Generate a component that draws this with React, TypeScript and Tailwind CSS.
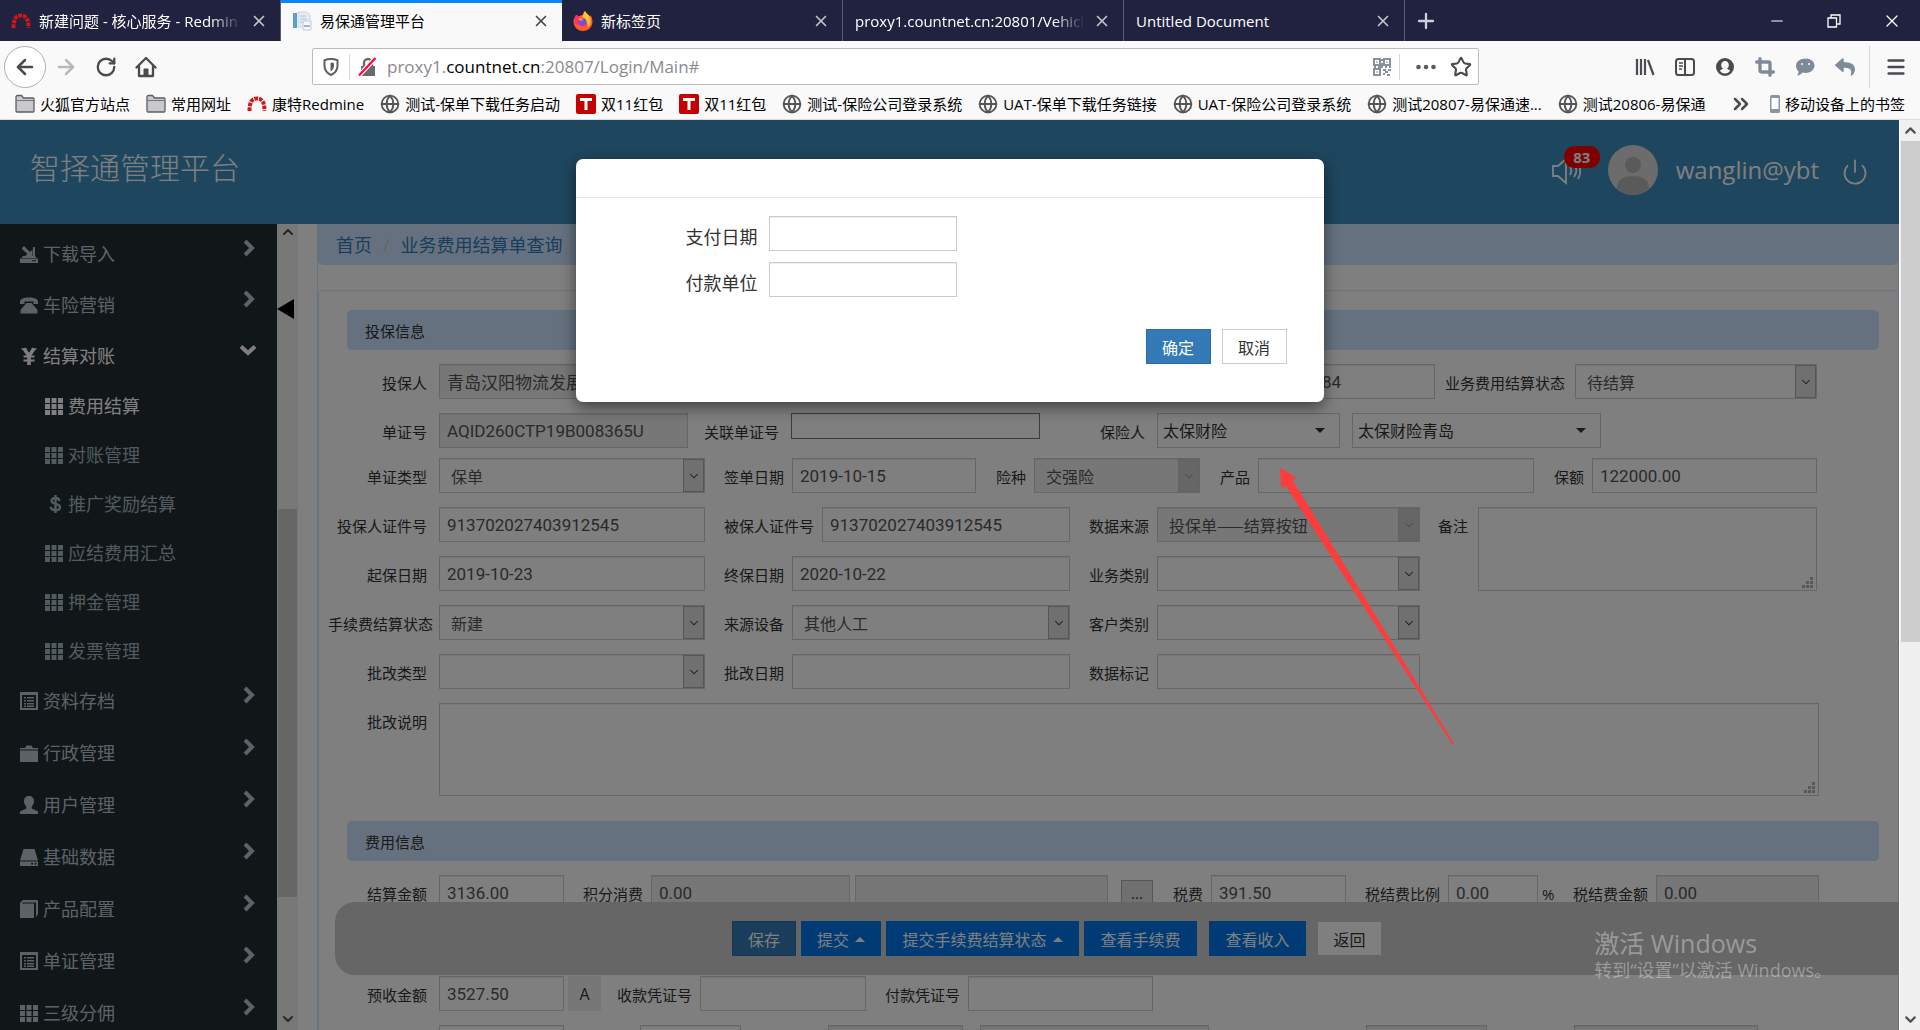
import type { ReactNode } from "react";
import clsx from "clsx";
import {
  ArrowLeft,
  ArrowRight,
  ChevronDown,
  ChevronUp,
  ChevronsRight,
  Crop,
  Globe,
  Menu,
  Minus,
  Plus,
  Power,
  RotateCw,
  Star,
  X,
} from "lucide-react";
import { FaReply } from "react-icons/fa";

const tabs = [
  { title: "新建问题 - 核心服务 - Redmin", icon: "redmine", fade: true },
  { title: "易保通管理平台", icon: "doc", active: true },
  { title: "新标签页", icon: "firefox" },
  { title: "proxy1.countnet.cn:20801/Vehicl", icon: "", fade: true },
  { title: "Untitled Document", icon: "" },
];

const bookmarks = [
  { title: "火狐官方站点", icon: "folder" },
  { title: "常用网址", icon: "folder" },
  { title: "康特Redmine", icon: "redmine" },
  { title: "测试-保单下载任务启动", icon: "globe" },
  { title: "双11红包", icon: "tmall" },
  { title: "双11红包", icon: "tmall" },
  { title: "测试-保险公司登录系统", icon: "globe" },
  { title: "UAT-保单下载任务链接", icon: "globe" },
  { title: "UAT-保险公司登录系统", icon: "globe" },
  { title: "测试20807-易保通速...", icon: "globe" },
  { title: "测试20806-易保通", icon: "globe" },
];

const menuTop = [
  { title: "下载导入", icon: "save" },
  { title: "车险营销", icon: "phone" },
  { title: "结算对账", icon: "yen", open: true },
];

const menuSub = [
  { title: "费用结算", icon: "th", active: true },
  { title: "对账管理", icon: "th" },
  { title: "推广奖励结算", icon: "usd" },
  { title: "应结费用汇总", icon: "th" },
  { title: "押金管理", icon: "th" },
  { title: "发票管理", icon: "th" },
];

const menuBottom = [
  { title: "资料存档", icon: "list" },
  { title: "行政管理", icon: "case" },
  { title: "用户管理", icon: "user" },
  { title: "基础数据", icon: "hdd" },
  { title: "产品配置", icon: "book" },
  { title: "单证管理", icon: "list" },
  { title: "三级分佣", icon: "th" },
];

function SiteIcon({ name }: { name: string }) {
  switch (name) {
    case "redmine":
      return (
        <svg viewBox="0 0 20 20" className="size-5 shrink-0" fill="none">
          <path d="M2.5 17C2.500 8 5 4.500 10 4.500S17.500 8 17.500 17" stroke="#d01818" strokeWidth="4" strokeDasharray="3.600 1" />
        </svg>
      );
    case "doc":
      return (
        <svg viewBox="0 0 20 20" className="size-5 shrink-0">
          <path d="M1 2h4v15H1z" fill="#5a9fd0" />
          <path d="M6 1h9l3 3v12H6z" fill="#e4ecf3" stroke="#c9d5e0" />
          <path d="M8 5h6M8 8h7M8 11h4" stroke="#b4c4d3" />
          <path d="M11 10h8v9h-8z" fill="#f3f6fa" stroke="#c0ccd8" />
          <path d="M12 15h6" stroke="#a5b6c6" strokeWidth="2" />
        </svg>
      );
    case "firefox":
      return (
        <svg viewBox="0 0 20 20" className="size-5 shrink-0">
          <path d="M3 4c1 .2 2 .8 2.500 1.500C7 4.500 9 4 10 4c0-2 1-3.500 2-4 .5 2 3 3 4.500 5 1-.2 1-1 1-1C20 8 20 12 18.500 15c-2 3.500-5 5-8.500 5-6 0-9.500-5-9.500-9.500C.5 8 2 6 3 4z" fill="#ff5a2c" />
          <path d="M12 0c.5 2 3 3 4.500 5.500 2.500 4 1 9-2 11 1-3 0-6-3-7.500C9.500 8 9 5 10.500 3z" fill="#ffc72c" />
          <path d="M3 4c1 .2 2 .8 2.500 1.500L8 8l-3 6-3-1C1 9 2 6 3 4z" fill="#ff2d6f" />
          <circle cx="9.500" cy="11" r="4" fill="#7b4ad8" />
          <path d="M5 8c2-2 4-1 5.500.5L7.500 10z" fill="#ff9a2a" />
        </svg>
      );
    case "folder":
      return (
        <svg viewBox="0 0 20 20" className="size-5 shrink-0">
          <path d="M1 4.500V3a1.500 1.500 0 0 1 1.500-1.500h4L8.500 4H18a1 1 0 0 1 1 1v12a1 1 0 0 1-1 1H2a1 1 0 0 1-1-1z" fill="#c9c9cb" stroke="#5f5f61" strokeWidth="1.300" />
          <path d="M1 6.500h18" stroke="#77777a" />
        </svg>
      );
    case "tmall":
      return (
        <svg viewBox="0 0 20 20" className="size-5 shrink-0">
          <rect width="20" height="20" rx="2" fill="#c40000" />
          <path d="M4 4h12v3h-4.500v9h-3V7H4z" fill="#fff" />
        </svg>
      );
    case "globe":
      return <Globe className="size-5 shrink-0 text-[#555]" strokeWidth={2.200} />;
    default:
      return null;
  }
}

function MenuIcon({ name }: { name: string }) {
  const cls = "size-[18px] shrink-0";
  switch (name) {
    case "save":
      return (
        <svg viewBox="0 0 18 18" className={cls} fill="currentColor">
          <path d="M2 3 4 1l6 6 2.500-2.500V11H5l2.500-2L2 4zM13 2h2v9l1.500 2h-15L3 11h10z" />
          <path fillRule="evenodd" d="M0 13.500h18V18H0zm12 1.800v1h4v-1z" />
        </svg>
      );
    case "phone":
      return (
        <svg viewBox="0 0 18 18" className={cls} fill="currentColor">
          <path d="M0 6c0-3 3-4.500 9-4.500S18 3 18 6v2h-4.500V5.500h-9V8H0z" />
          <path d="M6.500 7h5l6 7v3.500H.5V14z" />
        </svg>
      );
    case "yen":
      return (
        <svg viewBox="0 0 18 18" className={cls} fill="none" stroke="currentColor" strokeWidth="2.600">
          <path d="M4 1.500 9 9l5-7.500M9 8v10" strokeWidth="3.600" />
          <path d="M3.500 9.500h11M3.500 13.500h11" strokeWidth="2" />
          <path d="M1.500 2h5M11.500 2h5" strokeWidth="1.500" />
        </svg>
      );
    case "usd":
      return (
        <svg viewBox="0 0 18 18" className={cls} fill="none" stroke="currentColor" strokeWidth="2.400">
          <path d="M14.500 6c-.3-2-2-3-4-3-2.300 0-4 1-4 2.800 0 4 8.500 2 8.500 6.400 0 2-2 3-4.300 3S6 14 5.500 11.800M10.500 0v18" />
        </svg>
      );
    case "user":
      return (
        <svg viewBox="0 0 18 18" className={cls} fill="currentColor">
          <path d="M9 0c3 0 5 2 5 5 0 2.500-1 4-2.300 5.500v2L18 15.500V18H0v-2.500l6.300-3v-2C5 9 4 7.500 4 5c0-3 2-5 5-5z" />
        </svg>
      );
    case "list":
      return (
        <svg viewBox="0 0 18 18" className={cls} fill="currentColor">
          <path fillRule="evenodd" d="M0 0h18v18H0zM2 3v13h14V3z" />
          <path d="M4 5h2v1.500H4zm3 0h7v1.500H7zM4 8h2v1.500H4zm3 0h7v1.500H7zM4 11h2v1.500H4zm3 0h7v1.500H7zM4 13.500h2V15H4zm3 0h7V15H7z" />
        </svg>
      );
    case "case":
      return (
        <svg viewBox="0 0 18 18" className={cls} fill="currentColor">
          <path d="M0 4h5l1.500-2.500h5L13 4h5v1.500H0zM0 6.500h18V18H0z" />
        </svg>
      );
    case "hdd":
      return (
        <svg viewBox="0 0 18 18" className={cls} fill="currentColor">
          <path d="M3.500 1h11L18 12.500H0z" />
          <path fillRule="evenodd" d="M0 13.500h18V18H0zm11 1.500v1.500h2V15zm3.500 0v1.500h2V15z" />
        </svg>
      );
    case "book":
      return (
        <svg viewBox="0 0 18 18" className={cls} fill="currentColor">
          <path d="M3 0h14a1 1 0 0 1 1 1v13l-2 3V2.500H3L1.500 3.500H14V18H0V3z" />
        </svg>
      );
    default:
      return (
        <svg viewBox="0 0 18 18" className={cls} fill="currentColor">
          <path d="M0 1h5v5H0zM6.500 1h5v5h-5zM13 1h5v5h-5zM0 7h5v5H0zM6.500 7h5v5h-5zM13 7h5v5h-5zM0 13h5v5H0zM6.500 13h5v5h-5zM13 13h5v5h-5z" />
        </svg>
      );
  }
}

function BrowserTabs() {
  return (
    <div className="flex h-[41px] shrink-0 items-stretch bg-[#20223f] text-white">
      {tabs.map((tab, i) => (
        <div
          key={i}
          className={clsx(
            "flex w-[281px] items-center gap-2 pr-[12px]",
            tab.icon ? "pl-[11px]" : "pl-1",
            tab.active ? "border-t-[3px] border-[#0a84ff] bg-[#f9f9fa] pb-[3px] text-black" : "border-r border-[#5b5c74]"
          )}
        >
          {tab.icon ? <SiteIcon name={tab.icon} /> : <span />}
          <span className={clsx("flex-1 whitespace-nowrap", tab.fade && "[mask-image:linear-gradient(to_left,transparent,black_32px)]")}>
            {tab.title}
          </span>
          <button aria-label="关闭标签页" className={tab.active ? "text-[#444]" : "text-[#c4c4cc]"}>
            <X className="size-[18px]" strokeWidth={2.200} />
          </button>
        </div>
      ))}
      <button aria-label="新建标签页" className="ml-[9px] text-[#d0d0d8]">
        <Plus className="size-6" strokeWidth={2.300} />
      </button>
      <div className="ml-auto flex items-center gap-[39px] pr-[18px]">
        <button aria-label="最小化">
          <Minus className="size-[18px]" strokeWidth={1.500} />
        </button>
        <button aria-label="还原">
          <svg viewBox="0 0 18 18" className="size-[18px]" fill="none" stroke="currentColor" strokeWidth="1.300">
            <path d="M3 6h8.500v9H3zM6 6V3h9v9h-3.500" />
          </svg>
        </button>
        <button aria-label="关闭">
          <X className="size-5" strokeWidth={1.500} />
        </button>
      </div>
    </div>
  );
}

function NavBar() {
  return (
    <div className="flex h-[50px] shrink-0 items-center bg-[#f9f9fa] pl-1 pr-[13px] pt-px text-[#4a4a4f]">
      <button aria-label="后退" className="flex size-[42px] items-center justify-center rounded-full border border-[#b1b1b3] bg-white">
        <ArrowLeft className="size-6" strokeWidth={2.500} />
      </button>
      <button aria-label="前进" className="ml-2 text-[#b8b8ba]">
        <ArrowRight className="size-6" strokeWidth={2.500} />
      </button>
      <button aria-label="刷新" className="ml-[17px]">
        <RotateCw className="size-[22px]" strokeWidth={2.500} />
      </button>
      <button aria-label="主页" className="ml-[18px]">
        <svg viewBox="0 0 22 22" className="size-[22px]" fill="none" stroke="currentColor" strokeWidth="2.300">
          <path d="M1.500 11.500 11 2l9.500 9.500M4 10v10h14V10" strokeLinecap="round" strokeLinejoin="round" />
          <path d="M9 20v-7h4v7" fill="currentColor" strokeWidth="1" />
        </svg>
      </button>
      <div className="ml-[155px] flex h-[37px] min-w-0 flex-1 items-center rounded-xs border border-[#bcbcbe] bg-white pl-2 pr-[6px]">
        <svg viewBox="0 0 20 20" className="size-5" fill="none" stroke="#5f5f63" strokeWidth="2">
          <path d="M10 2c2.500 0 5 .6 6.500 1.200V9c0 4-2.500 7-6.500 9-4-2-6.500-5-6.500-9V3.200C5 2.600 7.500 2 10 2z" />
          <path d="M10 6c1 0 2 .2 2.500.4V9c0 2-1 3.600-2.500 4.700z" fill="#5f5f63" strokeWidth="1" />
        </svg>
        <span className="ml-2 h-[26px] w-px bg-[#d7d7db]" />
        <svg viewBox="0 0 20 20" className="ml-2 size-5" fill="none">
          <path d="M3 9h14v10H3z" fill="#6a6a6e" />
          <path d="M6 9V6a4 4 0 0 1 8 0v3" stroke="#6a6a6e" strokeWidth="2.400" />
          <path d="M1 18.500 17.500 1" stroke="#fff" strokeWidth="4.500" />
          <path d="M1 18.500 17.500 1" stroke="#ff0039" strokeWidth="2.200" />
        </svg>
        <p className="ml-[9px] flex-1 text-[17px] text-[#8a8a8d]">
          proxy1.<span className="text-black">countnet.cn</span>:20807/Login/Main#
        </p>
        <svg viewBox="0 0 18 18" className="size-[18px]" fill="none" stroke="#8a919c" strokeWidth="2">
          <path d="M1 1h6v6H1zM11 1h6v6h-6zM1 11h6v6H1z" />
          <path d="M3.500 4h1M13.500 4h1M3.500 14h1M9 1v2M9 5v4M1 9h2M5 9h5M12 9h2M16 9h2M10 12h3M15 12h3M12 14h3M10 16h2M14 17h3" />
        </svg>
        <span className="ml-2 h-[26px] w-px bg-[#d7d7db]" />
        <svg viewBox="0 0 20 20" className="ml-4 size-5" fill="#5c5c60">
          <circle cx="2.500" cy="10" r="2.300" />
          <circle cx="10" cy="10" r="2.300" />
          <circle cx="17.500" cy="10" r="2.300" />
        </svg>
        <button aria-label="加入书签" className="ml-[14px]">
          <Star className="size-[22px]" strokeWidth={2.300} />
        </button>
      </div>
      <div className="ml-[156px] flex items-center gap-5">
        <svg viewBox="0 0 20 20" className="size-5" fill="none" stroke="currentColor" strokeWidth="2.200">
          <path d="M2 2v16M6 2v16M10 2v16M13 3l5.500 15" />
        </svg>
        <svg viewBox="0 0 20 20" className="size-5" fill="none" stroke="currentColor" strokeWidth="2">
          <rect x="1" y="2" width="18" height="16" rx="2.500" />
          <path d="M10 2v16" />
          <path d="M4 6h4M4 9h4M4 12h3" strokeWidth="1.300" />
        </svg>
        <svg viewBox="0 0 20 20" className="size-5" fill="currentColor">
          <path fillRule="evenodd" d="M10 1a9 9 0 1 1 0 18 9 9 0 0 1 0-18zm0 3a3.800 3.800 0 0 0-3.800 4c0 1.700.8 3 1.800 3.800L4.800 13.500a6 6 0 0 0 10.400 0L12 11.800c1-.8 1.800-2.100 1.800-3.800A3.800 3.800 0 0 0 10 4z" />
        </svg>
        <Crop className="size-5 text-[#7f8a99]" strokeWidth={4} />
        <svg viewBox="0 0 20 20" className="size-5" fill="#7f8a99">
          <path fillRule="evenodd" d="M10.500 1.500c5 0 9 3 9 7s-4 7.500-9 7.500c-1 0-2-.1-3-.4C6 17.500 4 18.500 2 18.500c1-1 1.500-2.500 1.500-4C2 13 1 11 1 8.500c0-4 4.500-7 9.500-7zM7 6a1 1 0 1 0 0 2 1 1 0 0 0 0-2zm7 0a1 1 0 1 0 0 2 1 1 0 0 0 0-2z" />
        </svg>
        <FaReply className="size-5 text-[#7f8a99]" />
      </div>
      <span className="ml-[14px] h-[42px] w-px bg-[#d7d7db]" />
      <button aria-label="菜单" className="ml-[15px]">
        <Menu className="size-[22px]" strokeWidth={2.800} />
      </button>
    </div>
  );
}

function BookmarksBar() {
  return (
    <div className="flex h-[29px] shrink-0 items-center border-b border-[#dcdcde] bg-[#f9f9fa] pb-[3px] pl-[15px] pr-[15px] text-black">
      <div className="flex min-w-0 flex-1 gap-4">
        {bookmarks.map((b, i) => (
          <a key={i} href="#" className="flex items-center gap-[5px] whitespace-nowrap">
            <SiteIcon name={b.icon} />
            {b.title}
          </a>
        ))}
      </div>
      <ChevronsRight className="size-6 shrink-0 text-[#4a4a4f]" strokeWidth={2.500} />
      <svg viewBox="0 0 12 20" className="ml-4 h-5 w-3 shrink-0">
        <rect x="1" y="1" width="10" height="18" rx="1.500" fill="#8b95a1" />
        <path d="M2.500 4h7v11h-7z" fill="#fff" />
      </svg>
      <a href="#" className="ml-1 whitespace-nowrap">
        移动设备上的书签
      </a>
    </div>
  );
}

function Header() {
  return (
    <header className="flex h-[104px] shrink-0 items-center bg-[#3c8dbc] pb-1 pl-[30px] pr-[30px] text-white">
      <h1 className="flex-1 pb-1 text-[30px] font-light">智择通管理平台</h1>
      <div className="relative mr-[27px] size-[29px]">
        <svg viewBox="0 0 29 29" className="size-[29px]" fill="none" stroke="currentColor" strokeWidth="1.800">
          <path d="M1 10h5l8-7v24l-8-7H1z" />
          <path d="M18 11c1.500 2 1.500 5 0 8M22 8c3 4 3 9 0 13M26 6c3 5 3 12 0 17" />
        </svg>
        <span className="absolute -top-[10px] left-3 flex h-[22px] w-9 items-center justify-center rounded-[10px] bg-[#f00] text-[15px] font-bold">
          83
        </span>
      </div>
      <svg viewBox="0 0 50 50" className="size-[50px]">
        <circle cx="25" cy="25" r="25" fill="#d8d8d8" />
        <circle cx="25" cy="20" r="8" fill="#b5b5b5" />
        <path d="M9 43c0-9 7-12 16-12s16 3 16 12c-4 5-10 7-16 7s-12-2-16-7z" fill="#b5b5b5" />
      </svg>
      <span className="ml-[18px] text-[24px]">wanglin@ybt</span>
      <button aria-label="退出" className="ml-[22px] pt-1">
        <Power className="size-7" strokeWidth={1.500} />
      </button>
    </header>
  );
}

function MenuItem({ title, icon, open, className }: { title: string; icon: string; open?: boolean; className: string }) {
  return (
    <a href="#" className={clsx("flex items-center gap-[5px] px-5", className, open ? "text-white" : "text-[#b8c7ce]")}>
      <MenuIcon name={icon} />
      <span className="flex-1">{title}</span>
      <svg viewBox="0 0 18 18" className="mb-3 size-[18px]" fill="none" stroke="currentColor" strokeWidth="4">
        {open ? <path d="M2 5.500l7 6.500 7-6.500" /> : <path d="M6 2l7 7-7 7" />}
      </svg>
    </a>
  );
}

function Sidebar() {
  return (
    <nav className="w-[277px] shrink-0 overflow-hidden bg-[#222d32] pt-1 text-[18px]">
      {menuTop.map((m) => (
        <MenuItem key={m.title} {...m} className="h-[51px]" />
      ))}
      {menuSub.map((m) => (
        <a
          key={m.title}
          href="#"
          className={clsx("flex h-[49px] items-center gap-[5px] pl-[45px]", m.active ? "text-white" : "text-[#a3b6bf]")}
        >
          <MenuIcon name={m.icon} />
          {m.title}
        </a>
      ))}
      {menuBottom.map((m) => (
        <MenuItem key={m.title} {...m} className="h-[52px]" />
      ))}
    </nav>
  );
}

const box = "h-[35px] shrink-0 rounded-none border border-[#ccc] text-[#555] shadow-[inset_0_1px_1px_rgba(0,0,0,0.075)]";

function Label({ id, className, children }: { id: string; className: string; children: ReactNode }) {
  return (
    <label htmlFor={id} className={clsx("shrink-0 whitespace-nowrap pt-[3px] text-right text-[#333]", className)}>
      {children}
    </label>
  );
}

function Input({ id, value, className, readOnly }: { id: string; value?: string; className: string; readOnly?: boolean }) {
  return (
    <input
      id={id}
      defaultValue={value}
      readOnly={readOnly}
      className={clsx(
        box,
        "px-[7px] font-['Roboto','Noto_Sans_CJK_SC',sans-serif] text-[17px]",
        readOnly ? "bg-[#eee]" : "bg-white",
        className
      )}
    />
  );
}

function Select({ id, value, className, disabled }: { id: string; value?: string; className: string; disabled?: boolean }) {
  return (
    <div className={clsx("relative shrink-0", className)}>
      <select
        id={id}
        disabled={disabled}
        className={clsx(
          box,
          "w-full appearance-none pl-[11px] pr-6 font-['Noto_Sans_CJK_SC',sans-serif] text-[16px] opacity-100",
          disabled ? "bg-[#eee]" : "bg-white"
        )}
      >
        <option>{value}</option>
      </select>
      <span
        className={clsx(
          "pointer-events-none absolute inset-y-px right-px flex w-[21px] items-center justify-center border",
          disabled ? "border-[#c6c6c6] bg-[#ccc] text-[#999]" : "border-[#adadad] bg-[#e1e1e1] text-[#333]"
        )}
      >
        <ChevronDown className="size-[14px]" strokeWidth={1.800} />
      </span>
    </div>
  );
}

function Dropdown({ id, value, className }: { id: string; value: string; className: string }) {
  return (
    <button id={id} className={clsx("flex h-[35px] shrink-0 items-center border border-[#ccc] bg-white pl-[5px] pr-[14px] text-left text-[16px] text-[#333]", className)}>
      <span className="flex-1">{value}</span>
      <span className="border-x-5 border-t-5 border-x-transparent border-t-[#333]" />
    </button>
  );
}

function TextArea({ id, className }: { id: string; className: string }) {
  return (
    <div className={clsx("relative flex", className)}>
      <textarea id={id} className="w-full resize-none border border-[#ccc] bg-white px-2 shadow-[inset_0_1px_1px_rgba(0,0,0,0.075)]" />
      <svg viewBox="0 0 11 11" className="pointer-events-none absolute bottom-[3px] right-1 size-[11px]" fill="#b0b0b0">
        <path d="M8 0h3v3H8zM8 4h3v3H8zM4 4h3v3H4zM8 8h3v3H8zM4 8h3v3H4zM0 8h3v3H0z" />
      </svg>
    </div>
  );
}

function Row({ className, children }: { className?: string; children: ReactNode }) {
  return <div className={clsx("flex items-center", className ?? "mb-[14px]")}>{children}</div>;
}

function SectionTitle({ children }: { children: ReactNode }) {
  return <h2 className="mx-[19px] mb-[14px] flex h-10 items-center rounded-[5px] bg-[#cbe2fe] pl-[18px] pt-[2px] text-[#333]">{children}</h2>;
}

function InsuranceForm() {
  return (
    <section>
      <SectionTitle>投保信息</SectionTitle>
      <Row>
        <Label id="holder" className="w-[111px] pr-3">投保人</Label>
        <Input id="holder" value="青岛汉阳物流发展" readOnly className="w-[266px]" />
        <Input id="holderNo" value="84" className="ml-[609px] w-[121px]" />
        <Label id="feeState" className="w-[140px] pr-[10px]">业务费用结算状态</Label>
        <Select id="feeState" value="待结算" className="w-[242px]" />
      </Row>
      <Row className="mb-[10px]">
        <Label id="docNo" className="w-[111px] pr-3">单证号</Label>
        <Input id="docNo" value="AQID260CTP19B008365U" readOnly className="w-[249px]" />
        <Label id="relNo" className="w-[103px] pr-3">关联单证号</Label>
        <input id="relNo" className="h-[26px] w-[249px] shrink-0 self-start border border-[#767676] bg-white px-1" />
        <Label id="insurer" className="w-[117px] pr-3">保险人</Label>
        <Dropdown id="insurer" value="太保财险" className="w-[183px]" />
        <Dropdown id="branch" value="太保财险青岛" className="ml-3 w-[249px]" />
      </Row>
      <Row>
        <Label id="docType" className="w-[111px] pr-3">单证类型</Label>
        <Select id="docType" value="保单" className="w-[266px]" />
        <Label id="signDate" className="w-[87px] pr-2">签单日期</Label>
        <Input id="signDate" value="2019-10-15" className="w-[184px]" />
        <Label id="kind" className="w-[58px] pr-2">险种</Label>
        <Select id="kind" value="交强险" disabled className="w-[166px]" />
        <Label id="product" className="w-[58px] pr-2">产品</Label>
        <Input id="product" className="w-[276px]" />
        <Label id="amount" className="w-[58px] pr-2">保额</Label>
        <Input id="amount" value="122000.00" className="w-[225px]" />
      </Row>
      <div className="flex">
        <div>
          <Row>
            <Label id="holderId" className="w-[111px] pr-3">投保人证件号</Label>
            <Input id="holderId" value="913702027403912545" className="w-[266px]" />
            <Label id="insuredId" className="w-[117px] pr-2">被保人证件号</Label>
            <Input id="insuredId" value="913702027403912545" className="w-[248px]" />
            <Label id="source" className="w-[87px] pr-2">数据来源</Label>
            <Select id="source" value="投保单——结算按钮" disabled className="w-[263px]" />
          </Row>
          <Row>
            <Label id="startDate" className="w-[111px] pr-3">起保日期</Label>
            <Input id="startDate" value="2019-10-23" className="w-[266px]" />
            <Label id="endDate" className="w-[87px] pr-2">终保日期</Label>
            <Input id="endDate" value="2020-10-22" className="w-[278px]" />
            <Label id="bizType" className="w-[87px] pr-2">业务类别</Label>
            <Select id="bizType" className="w-[263px]" />
          </Row>
        </div>
        <Label id="remark" className="mt-[6px] w-[58px] pr-[10px]">备注</Label>
        <TextArea id="remark" className="mb-[14px] w-[339px]" />
      </div>
      <Row>
        <Label id="chargeState" className="w-[111px] pr-[6px]">手续费结算状态</Label>
        <Select id="chargeState" value="新建" className="w-[266px]" />
        <Label id="device" className="w-[87px] pr-2">来源设备</Label>
        <Select id="device" value="其他人工" className="w-[278px]" />
        <Label id="customer" className="w-[87px] pr-2">客户类别</Label>
        <Select id="customer" className="w-[263px]" />
      </Row>
      <Row>
        <Label id="changeType" className="w-[111px] pr-3">批改类型</Label>
        <Select id="changeType" className="w-[266px]" />
        <Label id="changeDate" className="w-[87px] pr-2">批改日期</Label>
        <Input id="changeDate" className="w-[278px]" />
        <Label id="dataMark" className="w-[87px] pr-2">数据标记</Label>
        <Input id="dataMark" className="w-[263px]" />
      </Row>
      <div className="mb-[25px] flex items-start pr-[79px]">
        <Label id="changeNote" className="mt-[6px] w-[111px] pr-3">批改说明</Label>
        <TextArea id="changeNote" className="h-[93px] flex-1" />
      </div>
    </section>
  );
}

function FeeForm() {
  return (
    <section>
      <SectionTitle>费用信息</SectionTitle>
      <Row className="mb-[66px]">
        <Label id="settle" className="w-[111px] pr-3">结算金额</Label>
        <Input id="settle" value="3136.00" className="w-[125px]" />
        <Label id="points" className="w-[87px] pr-2">积分消费</Label>
        <Input id="points" value="0.00" readOnly className="w-[199px]" />
        <Input id="pointsNote" readOnly className="ml-[5px] w-[253px]" />
        <button className="ml-[13px] h-[26px] w-8 shrink-0 border border-[#adadad] bg-[#e1e1e1] text-[#333]">...</button>
        <Label id="tax" className="w-[58px] pr-2">税费</Label>
        <Input id="tax" value="391.50" className="w-[135px]" />
        <Label id="taxRate" className="w-[102px] pr-2">税结费比例</Label>
        <Input id="taxRate" value="0.00" className="w-[90px]" />
        <span className="w-5 pl-1 pt-[3px] text-[#333]">%</span>
        <Label id="taxAmount" className="w-[98px] pr-2">税结费金额</Label>
        <Input id="taxAmount" value="0.00" readOnly className="w-[163px]" />
      </Row>
      <Row>
        <Label id="received" className="w-[111px] pr-3">预收金额</Label>
        <Input id="received" value="3527.50" className="w-[125px]" />
        <button className="ml-1 h-[35px] w-[33px] shrink-0 bg-[#efefef] text-[16px] text-[#333]">A</button>
        <Label id="receiptNo" className="w-[99px] pr-2">收款凭证号</Label>
        <Input id="receiptNo" className="w-[166px]" />
        <Label id="payNo" className="w-[102px] pr-2">付款凭证号</Label>
        <Input id="payNo" className="w-[185px]" />
      </Row>
      <Row>
        <Input id="fee1" className="ml-[111px] w-[125px]" />
        <Input id="fee2" className="ml-[76px] w-[101px]" />
        <Input id="fee3" readOnly className="ml-[87px] w-[135px]" />
        <Input id="fee4" readOnly className="ml-[17px] w-[229px]" />
        <Input id="fee5" readOnly className="ml-[157px] w-[121px]" />
        <Input id="fee6" readOnly className="ml-[87px] w-[184px]" />
      </Row>
    </section>
  );
}

function ActionBar() {
  const blue = "flex h-[35px] items-center justify-center gap-[6px] bg-[#0076ea] pt-[2px] text-white";
  const caret = <span className="border-x-5 border-b-5 border-x-transparent border-b-white" />;
  return (
    <div className="absolute bottom-[55px] left-[37px] right-0 flex h-[73px] items-center rounded-l-[20px] bg-[#ccc] pl-[397px] text-[16px]">
      <button className="h-[35px] w-16 border border-[#2e6da4] bg-[#337ab7] pt-[2px] text-white">保存</button>
      <button className={clsx(blue, "ml-[5px] w-20")}>提交{caret}</button>
      <button className={clsx(blue, "ml-[5px] w-[193px]")}>提交手续费结算状态{caret}</button>
      <button className={clsx(blue, "ml-[5px] w-[113px]")}>查看手续费</button>
      <button className={clsx(blue, "ml-3 w-[97px]")}>查看收入</button>
      <button className="ml-3 h-[33px] w-[63px] bg-white pt-[2px] text-[#333]">返回</button>
    </div>
  );
}

function PayDialog() {
  return (
    <div role="dialog" className="mt-[39px] h-[243px] w-[748px] rounded-[7px] bg-white shadow-[0_5px_15px_rgba(0,0,0,0.5)]">
      <div className="h-[39px] border-b border-[#e5e5e5]" />
      <div className="space-y-[11px] pt-[18px] text-[18px] text-[#333]">
        <div className="flex items-center">
          <label htmlFor="payDate" className="w-[193px] pr-[11px] pt-[6px] text-right">支付日期</label>
          <Input id="payDate" className="w-[188px]" />
        </div>
        <div className="flex items-center">
          <label htmlFor="payUnit" className="w-[193px] pr-[11px] pt-[6px] text-right">付款单位</label>
          <Input id="payUnit" className="w-[188px]" />
        </div>
      </div>
      <div className="mt-8 flex justify-end gap-[11px] pr-[37px] text-[16px]">
        <button className="h-[35px] w-[65px] border border-[#2e6da4] bg-[#337ab7] pt-[2px] text-white">确定</button>
        <button className="h-[35px] w-[65px] border border-[#ccc] bg-white pt-[2px] text-[#333]">取消</button>
      </div>
    </div>
  );
}

export default function App() {
  return (
    <div className="flex h-screen flex-col overflow-hidden bg-white font-['Open_Sans','Noto_Sans_CJK_SC',sans-serif] text-[15px] leading-5">
      <BrowserTabs />
      <NavBar />
      <BookmarksBar />

      <div className="flex min-h-0 flex-1">
        <div className="relative flex min-w-0 flex-1 flex-col overflow-hidden">
          <Header />
          <div className="flex min-h-0 flex-1">
            <Sidebar />
            <div className="flex w-[21px] shrink-0 flex-col items-center bg-[#f0f0f0] text-[#505050]">
              <ChevronUp className="size-4" strokeWidth={3} />
              <div className="mt-[269px] h-[388px] w-[19px] bg-[#cdcdcd]" />
              <ChevronDown className="mb-[3px] mt-auto size-4" strokeWidth={3} />
            </div>
            <main className="relative ml-[19px] min-w-0 flex-1 overflow-hidden border-x border-[#cbe2fe]">
              <div className="flex h-[41px] items-center rounded-b-[5px] bg-[#cbe2fe] pl-[18px] text-[18px] text-[#337ab7]">
                <a href="#">首页</a>
                <span className="px-[11px] text-[#ccc]">/</span>
                <a href="#">业务费用结算单查询</a>
              </div>
              <div className="mt-[25px] rounded-tl-[5px] border-l border-t border-[#dce9f8] pl-[9px] pt-[19px]">
                <InsuranceForm />
                <FeeForm />
              </div>
            </main>
          </div>

          {/* Action bar sits under the backdrop together with the page */}
          <div className="absolute inset-y-0 left-[298px] right-0">
            <ActionBar />
          </div>

          {/* Backdrop and dialog */}
          <div className="absolute inset-0 flex items-start justify-center bg-black/50">
            <PayDialog />
          </div>

          {/* Sidebar toggle */}
          <button
            aria-label="收起菜单"
            className="absolute left-[277px] top-[179px] border-y-10 border-r-17 border-y-transparent border-r-black"
          />

          {/* Pointer arrow */}
          <svg viewBox="0 0 175 278" className="pointer-events-none absolute left-[1280px] top-[348px] h-[278px] w-[175px]">
            <path d="M0 0l16 10-4 2L173.500 275l-1 1L6 17.500 2 20z" fill="#ff3b3b" stroke="#ff3b3b" strokeWidth="0.600" />
          </svg>

          <div className="pointer-events-none absolute bottom-[49px] right-[67px] text-white/35">
            <p className="text-[25px] leading-8">激活 Windows</p>
            <p className="text-[18px] leading-[22px]">转到“设置”以激活 Windows。</p>
          </div>
        </div>

        {/* Page scrollbar */}
        <div className="flex w-[21px] shrink-0 flex-col items-center border-l border-white bg-[#f0f0f0] text-[#505050]">
          <ChevronUp className="my-[2px] size-[17px] shrink-0" strokeWidth={3} />
          <div className="h-[501px] w-[19px] bg-[#cdcdcd]" />
          <ChevronDown className="mb-[2px] mt-auto size-[17px]" strokeWidth={3} />
        </div>
      </div>
    </div>
  );
}
